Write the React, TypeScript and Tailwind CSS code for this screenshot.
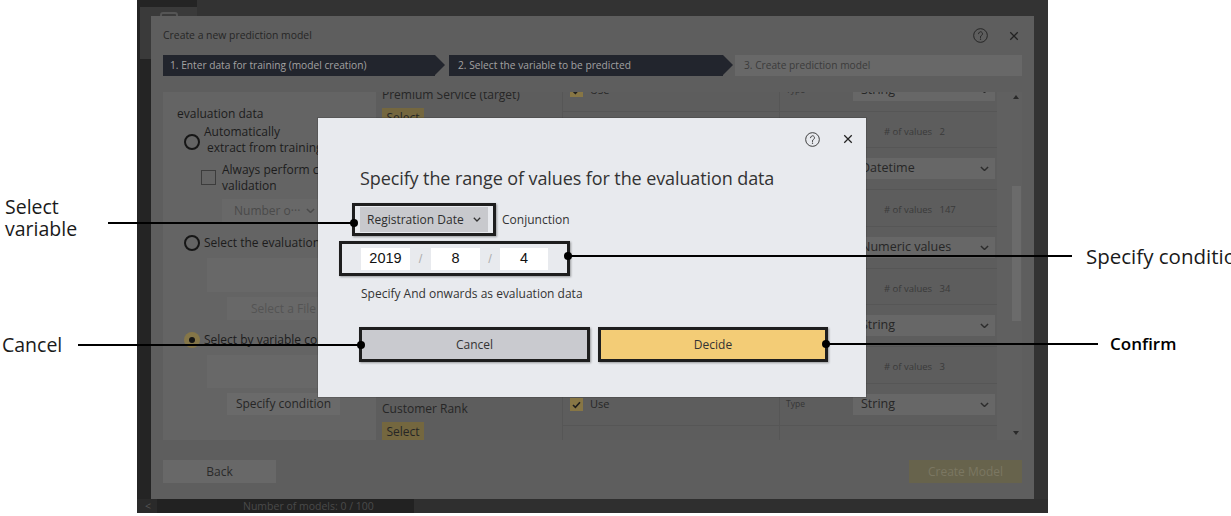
import React from "react";

function HelpIcon({ color, size }: { color: string; size: number }) {
  return (
    <svg width={size} height={size} viewBox="0 0 16 16" fill="none" stroke={color} strokeWidth="1">
      <circle cx="8" cy="8" r="7.3" />
      <path d="M5.9 6.1a2.1 2.1 0 1 1 3.2 1.8c-.7.4-1.1.8-1.1 1.6v.6" strokeLinecap="round" />
      <circle cx="8" cy="11.9" r="0.7" fill={color} stroke="none" />
    </svg>
  );
}

function CloseIcon({ color, size }: { color: string; size: number }) {
  return (
    <svg width={size} height={size} viewBox="0 0 12 12" fill="none" stroke={color} strokeWidth="1.5">
      <path d="M1.5 1.5l9 9M10.5 1.5l-9 9" />
    </svg>
  );
}

function Chevron({ color, w = 9 }: { color: string; w?: number }) {
  return (
    <svg width={w} height={w * 0.6} viewBox="0 0 10 6" fill="none" stroke={color} strokeWidth="1.6">
      <path d="M1 1l4 4 4-4" />
    </svg>
  );
}

function Radio({ selected = false }: { selected?: boolean }) {
  if (selected)
    return (
      <div className="w-[16px] h-[16px] rounded-full bg-[#857648] flex items-center justify-center shrink-0">
        <div className="w-[6px] h-[6px] rounded-full bg-[#151515]" />
      </div>
    );
  return <div className="w-[16px] h-[16px] rounded-full border-2 border-[#161616] shrink-0" />;
}

const vars = [
  { name: "Premium Service (target)", type: "String", n: "2", h: "h-[78px]" },
  { name: "Registration Date", type: "Datetime", n: "147", h: "h-[79px]" },
  { name: "Age", type: "Numeric values", n: "34", h: "h-[78px]" },
  { name: "Gender", type: "String", n: "3", h: "h-[79px]" },
  { name: "Customer Rank", type: "String", n: "4", h: "h-[78px]" },
];

function VarBlock({ v }: { v: (typeof vars)[number] }) {
  return (
    <div className={`flex ${v.h}`}>
      <div className="w-[186px] shrink-0 pl-[6px] pt-[16px] border-b border-[#565656]">
        <div className="text-[12px] leading-[18px] text-[#262626] whitespace-nowrap">{v.name}</div>
        <div className="mt-[4px] w-[42px] h-[19px] bg-[#74673f] text-[12px] leading-[19px] text-center text-[#262626]">
          Select
        </div>
      </div>
      <div className="w-[435px] shrink-0 border-l border-[#565656] flex flex-col">
        <div className="h-[42px] shrink-0 flex border-b border-[#565656]">
          <div className="w-[216px] flex items-center pl-[7px] gap-[7px]">
            <div className="w-[13px] h-[13px] bg-[#877645] flex items-center justify-center">
              <svg width="9" height="8" viewBox="0 0 9 8" fill="none" stroke="#1d1d1d" strokeWidth="1.6">
                <path d="M1 4l2.4 2.4L8 1.3" />
              </svg>
            </div>
            <span className="text-[11px] text-[#262626]">Use</span>
          </div>
          <div className="flex-1 border-l border-[#565656] flex items-center pl-[6px]">
            <span className="w-[67px] text-[8.5px] text-[#353535]">Type</span>
            <div className="w-[142px] h-[21px] bg-[#676767] flex items-center justify-between pl-[8px] pr-[6px]">
              <span className="text-[12.5px] text-[#262626]">{v.type}</span>
              <Chevron color="#2c2c2c" w={9} />
            </div>
          </div>
        </div>
        <div className="flex-1 flex border-b border-[#565656]">
          <div className="w-[216px]" />
          <div className="flex-1 border-l border-[#565656] flex items-center pt-[5px] pl-[104px] text-[9.5px] text-[#3a3a3a] whitespace-nowrap">
            # of values&nbsp;&nbsp;&nbsp;{v.n}
          </div>
        </div>
      </div>
    </div>
  );
}

function BackgroundDialog() {
  return (
    <div className="absolute left-[14px] top-[16px] w-[883px] h-[483px] bg-[#5e5e5e] flex flex-col px-[12px]">
      <div className="h-[39px] flex items-center justify-between">
        <span className="text-[10.4px] text-[#262626]">Create a new prediction model</span>
        <div className="flex items-center gap-[21px] pr-[3px]">
          <HelpIcon color="#222" size={15} />
          <CloseIcon color="#222" size={10} />
        </div>
      </div>
      <div className="flex h-[21px] text-[10.2px]">
        <div className="flex">
          <div className="w-[272px] bg-[#22252d] flex items-center pl-[7px] text-[#a2a2a2]">
            1. Enter data for training (model creation)
          </div>
          <div className="w-0 h-0 border-y-[10.5px] border-y-transparent border-l-[10px] border-l-[#22252d]" />
        </div>
        <div className="flex ml-[4px]">
          <div className="w-[274px] bg-[#22252d] flex items-center pl-[9px] text-[#a2a2a2]">
            2. Select the variable to be predicted
          </div>
          <div className="w-0 h-0 border-y-[10.5px] border-y-transparent border-l-[10px] border-l-[#22252d]" />
        </div>
        <div className="ml-[2px] flex-1 bg-[#686868] flex items-center pl-[9px] text-[#3b3b3b]">
          3. Create prediction model
        </div>
      </div>
      <div className="mt-[16px] flex h-[348px]">
        <div className="w-[213px] shrink-0 bg-[#646464] overflow-hidden flex flex-col text-[12px] text-[#1c1c1c]">
          <div className="mt-[13px] h-[18px] leading-[18px] pl-[14px]">evaluation data</div>
          <div className="mt-[1px] flex pl-[21px]">
            <div className="mt-[10px]">
              <Radio />
            </div>
            <div className="ml-[4px] leading-[16px] whitespace-nowrap">
              <div>Automatically</div>
              <div className="pl-[3px]">extract from training data</div>
            </div>
          </div>
          <div className="mt-[6px] flex pl-[38px]">
            <div className="mt-[8px] w-[15px] h-[15px] border border-[#3c3c3c] shrink-0" />
            <div className="ml-[6px] leading-[16px] whitespace-nowrap">
              <div>Always perform cross</div>
              <div>validation</div>
            </div>
          </div>
          <div className="mt-[5px] ml-[59px] w-[100px] h-[23px] bg-[#686868] flex items-center justify-between pl-[12px] pr-[7px] text-[#4a4a4a]">
            <span>Number o···</span>
            <Chevron color="#4a4a4a" w={9} />
          </div>
          <div className="mt-[12px] h-[18px] flex items-center pl-[21px] whitespace-nowrap">
            <Radio />
            <span className="ml-[4px]">Select the evaluation data file</span>
          </div>
          <div className="mt-[6px] ml-[44px] w-[160px] h-[34px] bg-[#686868] shrink-0" />
          <div className="mt-[5px] ml-[64px] w-[113px] h-[23px] bg-[#686868] flex items-center justify-center text-[#545454] shrink-0">
            Select a File
          </div>
          <div className="mt-[11px] h-[18px] flex items-center pl-[21px] whitespace-nowrap">
            <Radio selected />
            <span className="ml-[4px]">Select by variable condition</span>
          </div>
          <div className="mt-[6px] ml-[44px] w-[160px] h-[33px] bg-[#686868] shrink-0" />
          <div className="mt-[5px] ml-[64px] w-[113px] h-[22px] bg-[#6a6a6a] flex items-center justify-center text-[#262626] shrink-0">
            Specify condition
          </div>
        </div>
        <div className="w-[621px] shrink-0 overflow-hidden bg-[#5d5d5d]">
          <div className="-mt-[22px]">
            {vars.map((v) => (
              <VarBlock key={v.name} v={v} />
            ))}
          </div>
        </div>
        <div className="flex-1 bg-[#606060] flex flex-col items-end pr-[1px]">
          <div className="mt-[3px] mr-[2px] w-0 h-0 border-x-[3px] border-x-transparent border-b-[4px] border-b-[#2a2a2a]" />
          <div className="mt-[87px] w-[9px] h-[135px] bg-[#6b6b6b]" />
          <div className="mt-[110px] mr-[2px] w-0 h-0 border-x-[3px] border-x-transparent border-t-[4px] border-t-[#2a2a2a]" />
        </div>
      </div>
      <div className="mt-[20px] flex justify-between">
        <div className="w-[113px] h-[23px] bg-[#686868] flex items-center justify-center text-[12px] text-[#2a2a2a]">
          Back
        </div>
        <div className="w-[113px] h-[23px] bg-[#67634c] flex items-center justify-center text-[12px] text-[#7b7762]">
          Create Model
        </div>
      </div>
    </div>
  );
}

function Modal() {
  return (
    <div className="absolute left-[181px] top-[118px] w-[548px] h-[279px] bg-[#e8eaee] shadow-[0_0_0_1px_rgba(0,0,0,0.12)] flex flex-col">
      <div className="h-[42px] flex items-center justify-end gap-[23px] pr-[13px]">
        <HelpIcon color="#333" size={15} />
        <CloseIcon color="#222" size={10} />
      </div>
      <div className="pl-[42px] flex flex-col items-start">
        <div className="mt-[7px] text-[18px] leading-[22px] tracking-[-0.1px] text-[#333] whitespace-nowrap">
          Specify the range of values for the evaluation data
        </div>
        <div className="mt-[14px] flex items-center">
          <div className="-ml-[8px] border-[3px] border-[#1e1e1e] px-[5px] py-[1px] shadow-[1px_1px_2px_rgba(0,0,0,0.35)]">
            <div className="w-[128px] h-[25px] bg-[#c8c9cd] flex items-center justify-between pl-[7px] pr-[7px]">
              <span className="text-[12px] text-[#2e2e2e]">Registration Date</span>
              <Chevron color="#333" w={8} />
            </div>
          </div>
          <span className="ml-[6px] text-[12px] text-[#333]">Conjunction</span>
        </div>
        <div className="mt-[5px] -ml-[21px] border-[3px] border-[#1e1e1e] px-[19px] pt-[4px] pb-[3px] shadow-[1px_1px_2px_rgba(0,0,0,0.35)] flex items-center font-['Liberation_Sans',sans-serif] text-[14.5px] text-[#111]">
          <div className="w-[49px] h-[22px] bg-white flex items-center justify-center">2019</div>
          <div className="w-[21px] text-center text-[#b0b0b0] text-[13px]">/</div>
          <div className="w-[49px] h-[22px] bg-white flex items-center justify-center">8</div>
          <div className="w-[20px] text-center text-[#b0b0b0] text-[13px]">/</div>
          <div className="w-[48px] h-[22px] bg-white flex items-center justify-center">4</div>
        </div>
        <div className="mt-[10px] ml-[1px] text-[12px] leading-[16px] text-[#333]">
          Specify And onwards as evaluation data
        </div>
        <div className="mt-[25px] -ml-[1px] flex gap-[8px]">
          <div className="border-[3px] border-[#1e1e1e] shadow-[1px_1px_2px_rgba(0,0,0,0.35)]">
            <div className="w-[225px] h-[29px] bg-[#c9cacf] flex items-center justify-center text-[12px] text-[#333]">
              Cancel
            </div>
          </div>
          <div className="border-[3px] border-[#1e1e1e] shadow-[1px_1px_2px_rgba(0,0,0,0.35)]">
            <div className="w-[224px] h-[29px] bg-[#f3cc76] flex items-center justify-center text-[12px] text-[#333]">
              Decide
            </div>
          </div>
        </div>
      </div>
    </div>
  );
}

function AppShot() {
  return (
    <div className="relative w-[911px] h-[513px] shrink-0 flex flex-col bg-[#333]">
      <div className="flex h-[499px]">
        <div className="w-[60px] bg-[#242424] flex flex-col">
          <div className="mt-[7px] ml-[3px] w-[57px] h-[52px] bg-[#3a3a3a] flex justify-center">
            <div className="mt-[5px] w-[18px] h-[12px] border-2 border-[#555] rounded-[3px]" />
          </div>
        </div>
        <div className="flex-1 bg-[#333]" />
      </div>
      <div className="h-[14px] flex text-[10.5px] leading-[14px] text-[#4a4a4a]">
        <div className="w-[20px] bg-[#2a2a2a] pl-[8px] text-[#555]">&lt;</div>
        <div className="w-[257px] bg-[#222] pl-[86px] whitespace-nowrap">Number of models: 0 / 100</div>
        <div className="flex-1 bg-[#2f2f2f]" />
      </div>
      <BackgroundDialog />
      <Modal />
    </div>
  );
}

export default function App() {
  return (
    <div className="relative w-[1231px] h-[516px] overflow-hidden bg-white font-['Open_Sans',sans-serif]">
      <div className="flex h-[513px]">
        <div className="w-[137px] shrink-0 flex flex-col text-[19.5px] leading-[22px] text-[#1a1a1a]">
          <div className="mt-[196px] pl-[5px]">
            <div>Select</div>
            <div>variable</div>
          </div>
          <div className="mt-[94px] pl-[2px]">Cancel</div>
        </div>
        <AppShot />
        <div className="flex-1 flex flex-col overflow-hidden leading-[22px]">
          <div className="mt-[245px] pl-[38px] text-[20.5px] text-[#1a1a1a] whitespace-nowrap">Specify condition</div>
          <div className="mt-[66px] pl-[62px] text-[17px] font-semibold text-black whitespace-nowrap">Confirm</div>
        </div>
      </div>

      {/* annotation leader lines */}
      <div className="absolute left-[108px] top-[222px] w-[246px] h-[2px] bg-black" />
      <div className="absolute left-[350px] top-[219px] w-[8px] h-[8px] rounded-full bg-black" />

      <div className="absolute left-[78px] top-[344px] w-[283px] h-[2px] bg-black" />
      <div className="absolute left-[357px] top-[341px] w-[8px] h-[8px] rounded-full bg-black" />

      <div className="absolute left-[568px] top-[255px] w-[504px] h-[2px] bg-black" />
      <div className="absolute left-[564px] top-[252px] w-[8px] h-[8px] rounded-full bg-black" />

      <div className="absolute left-[826px] top-[343px] w-[272px] h-[2px] bg-black" />
      <div className="absolute left-[822px] top-[340px] w-[8px] h-[8px] rounded-full bg-black" />
    </div>
  );
}
